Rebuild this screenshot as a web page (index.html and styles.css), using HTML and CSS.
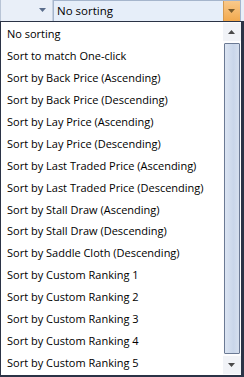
FILE: index.html
```html
<!DOCTYPE html>
<html>
<head>
<meta charset="utf-8">
<link rel="stylesheet" href="styles.css">
</head>
<body>
<div class="header">
  <div class="hcell">
    <svg class="harrow" width="8" height="5" viewBox="0 0 8 5"><path d="M0 0H7L3.5 4Z" fill="#5a6d8c"/></svg>
  </div>
  <div class="combo">
    <span class="combo-text">No sorting</span>
    <div class="combo-btn">
      <svg width="8" height="5" viewBox="0 0 8 5"><path d="M0 0H7L3.5 4Z" fill="#7a5a2a"/></svg>
    </div>
  </div>
</div>
<div class="popup">
  <ul class="list">
    <li>No sorting</li>
    <li>Sort to match One-click</li>
    <li>Sort by Back Price (Ascending)</li>
    <li>Sort by Back Price (Descending)</li>
    <li>Sort by Lay Price (Ascending)</li>
    <li>Sort by Lay Price (Descending)</li>
    <li>Sort by Last Traded Price (Ascending)</li>
    <li>Sort by Last Traded Price (Descending)</li>
    <li>Sort by Stall Draw (Ascending)</li>
    <li>Sort by Stall Draw (Descending)</li>
    <li>Sort by Saddle Cloth (Descending)</li>
    <li>Sort by Custom Ranking 1</li>
    <li>Sort by Custom Ranking 2</li>
    <li>Sort by Custom Ranking 3</li>
    <li>Sort by Custom Ranking 4</li>
    <li>Sort by Custom Ranking 5</li>
  </ul>
  <div class="scrollbar">
    <div class="sb-btn">
      <svg width="8" height="5" viewBox="0 0 8 5"><path d="M3.5 0L7 4H0Z" fill="#4a4a4a"/></svg>
    </div>
    <div class="thumb"></div>
    <div class="sb-btn">
      <svg width="8" height="5" viewBox="0 0 8 5"><path d="M0 0H7L3.5 4Z" fill="#4a4a4a"/></svg>
    </div>
  </div>
</div>
</body>
</html>
```
FILE: styles.css
```css
html, body {
  margin: 0;
  padding: 0;
  background: #ffffff;
  width: 244px;
  height: 377px;
  overflow: hidden;
}
body {
  font-family: "Open Sans", "Noto Sans", sans-serif;
  font-size: 11px;
  color: #000;
}
.header {
  display: flex;
  height: 21px;
  background: #e9eff8;
  border-left: 1px solid #b8c4d6;
  box-sizing: border-box;
}
.hcell {
  width: 52px;
  display: flex;
  align-items: center;
  justify-content: flex-end;
  padding-right: 5px;
  box-sizing: border-box;
  border-right: 1px solid #c7d1df;
}
.combo {
  flex: 1;
  display: flex;
  align-items: center;
  background: #e6eef9;
  border: 1px solid #a5b5cc;
  border-bottom: none;
  margin-right: 3px;
}
.combo-text {
  flex: 1;
  padding-left: 3px;
  line-height: 18px;
  font-size: 11.5px;
}
.combo-btn {
  width: 16px;
  height: 20px;
  background: linear-gradient(#f9c98b, #f2a94e);
  border-left: 1px solid #d49a52;
  display: flex;
  align-items: center;
  justify-content: center;
}
.popup {
  display: flex;
  height: 356px;
  border: 1px solid #2b3346;
  border-right-width: 3px;
  border-bottom-width: 2px;
  box-sizing: border-box;
  background: #fff;
}
.list {
  flex: 1;
  list-style: none;
  margin: 0;
  padding: 1px 0 0 0;
}
.list li {
  height: 21.95px;
  line-height: 22px;
  padding-left: 6px;
  white-space: nowrap;
}
.scrollbar {
  width: 18px;
  display: flex;
  flex-direction: column;
  background: #fdfdfe;
  padding: 1px 0 1px 0;
}
.sb-btn {
  height: 18px;
  display: flex;
  align-items: center;
  justify-content: center;
  background: #f1f3f7;
}
.thumb {
  flex: 1;
  margin: 2px 1px;
  border: 1px solid #6b7a94;
  border-radius: 1px;
  background: linear-gradient(90deg, #dbe4f2, #c9d6ea 60%, #d5dfee);
}
```
